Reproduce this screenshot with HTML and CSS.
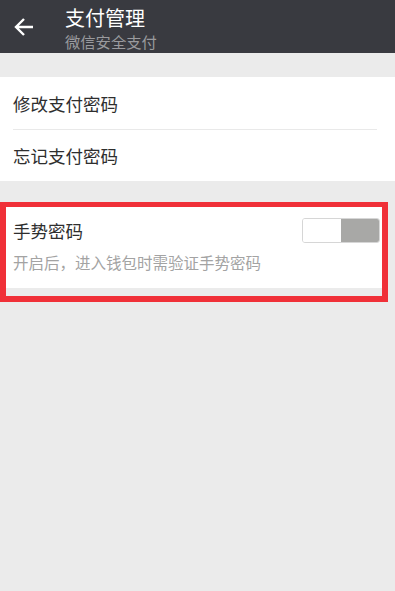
FILE: index.html
```html
<!DOCTYPE html>
<html lang="zh-CN">
<head>
  <meta charset="UTF-8">
  <meta name="viewport" content="width=device-width, initial-scale=1">
  <title>支付管理</title>
  <link rel="stylesheet" href="styles.css">
</head>
<body>
  <header class="topbar">
    <a class="back" href="#">
      <svg width="22" height="22" viewBox="0 0 22 22">
        <path d="M20 11H3M11 3L3 11l8 8" fill="none" stroke="#fff" stroke-width="2.4"/>
      </svg>
    </a>
    <div class="titles">
      <div class="title">支付管理</div>
      <div class="subtitle">微信安全支付</div>
    </div>
  </header>

  <!-- password settings -->
  <div class="group">
    <div class="row">修改支付密码</div>
    <div class="row">忘记支付密码</div>
  </div>

  <!-- gesture password, highlighted -->
  <div class="highlight">
    <div class="gesture">
      <div class="gesture-head">
        <span class="row-label">手势密码</span>
        <span class="switch"><span class="knob"></span><span class="track"></span></span>
      </div>
      <p class="hint">开启后，进入钱包时需验证手势密码</p>
    </div>
  </div>
</body>
</html>
```

FILE: styles.css
```css
:root {
  --bar: #393a40;
  --bg: #ebebeb;
  --line: #e9e9e9;
  --red: #f03038;
  --muted: #a3a3a3;
}
* { margin:0; padding:0; box-sizing:border-box; }
body {
  font-family: "Noto Sans CJK SC", "Noto Sans", sans-serif;
  background: var(--bg);
  min-height: 100vh;
  color: #2e2e2e;
}
.topbar {
  display:flex; align-items:center;
  height:53px; background:var(--bar);
}
.back { display:flex; width:65px; padding-left:13px; margin-top:1px; }
.titles { display:flex; flex-direction:column; padding-top:3px; }
.title { color:#fff; font-size:20px; line-height:24px; }
.subtitle { color:#9a9a9e; font-size:15.3px; line-height:20px; margin-top:1px; }

.group {
  background:#fff;
  margin-top:24px;
  padding-left:13px;
}
.row {
  height:52px; display:flex; align-items:center;
  font-size:17.5px;
}
.row + .row { border-top:1px solid var(--line); margin-right:18px; }

.highlight {
  margin-top:21px;
  width:388px;
  border:6px solid var(--red);
  border-top-width:5px;
  padding-bottom:8px;
}
.gesture { background:#fff; padding:0 2px 0 7px; height:81px; }
.gesture-head {
  display:flex; align-items:center; justify-content:space-between;
  padding-top:10px;
}
.row-label { font-size:17.5px; line-height:27px; }
.switch {
  display:flex; width:78px; height:25px;
  border:1px solid #d6d6d6; border-radius:3px; overflow:hidden;
}
.knob { flex:1; background:#fff; }
.track { flex:1; background:#a8a8a6; }
.hint { color:var(--muted); font-size:15.5px; margin-top:7px; }
```
